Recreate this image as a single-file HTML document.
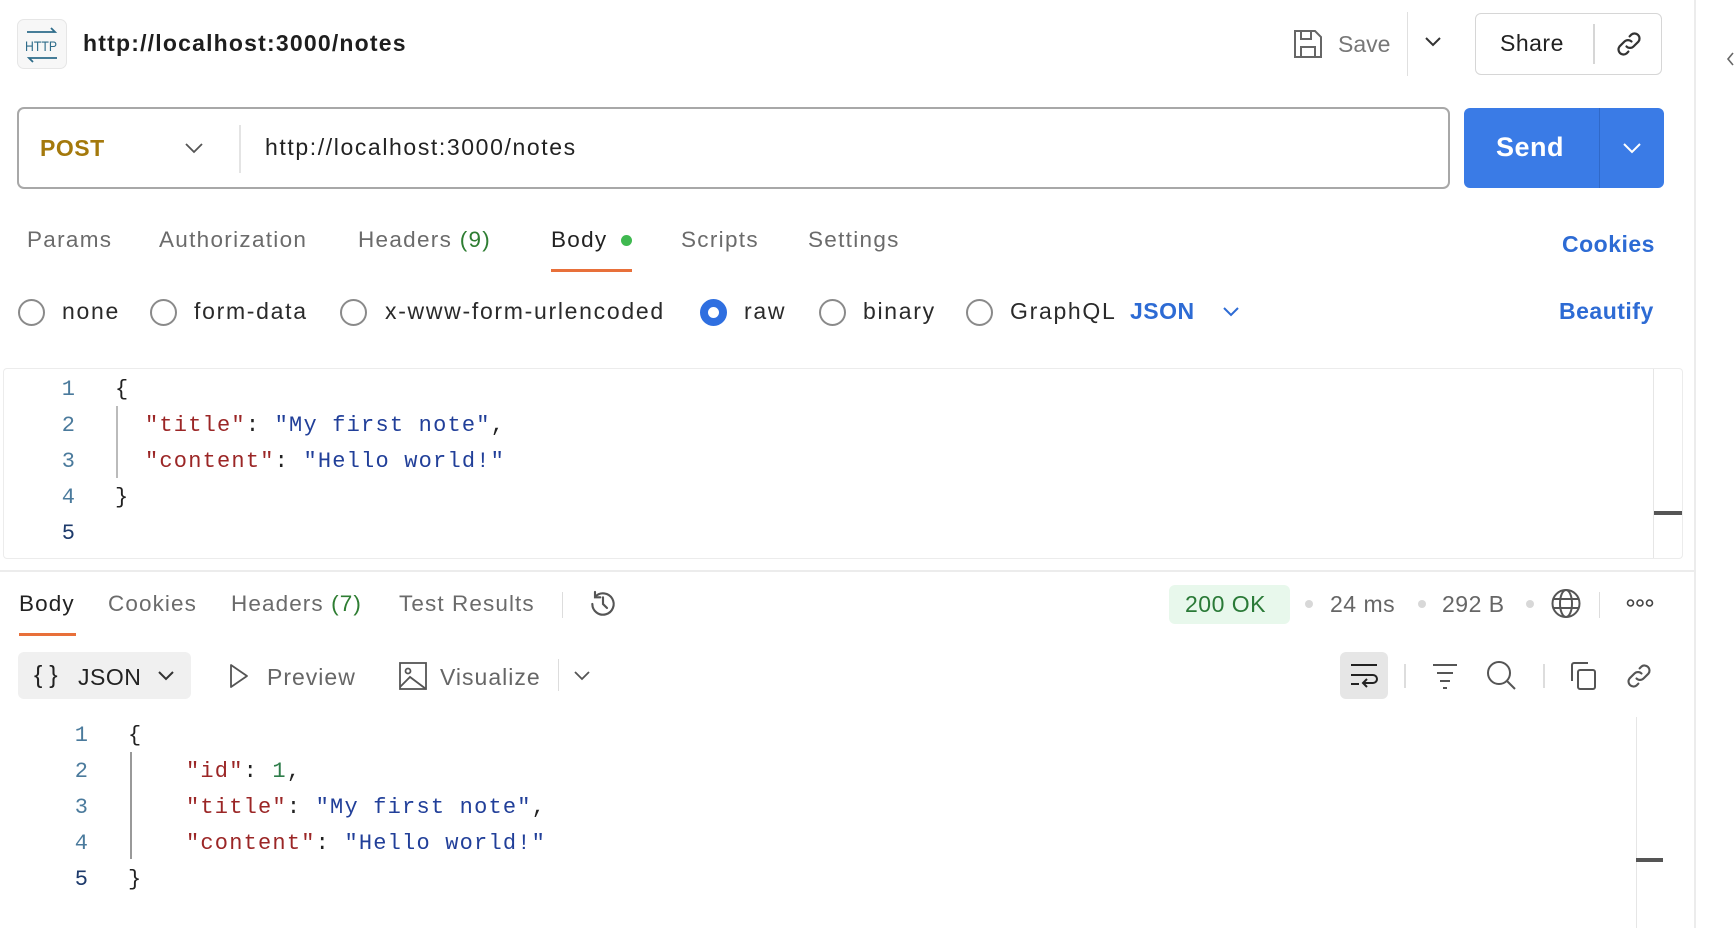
<!DOCTYPE html>
<html><head><meta charset="utf-8"><style>
*{margin:0;padding:0;box-sizing:border-box}
body{width:1734px;height:928px;background:#fff;position:relative;overflow:hidden;font-family:"Liberation Sans",sans-serif;color:#212121}
.a{position:absolute;white-space:nowrap}
.t{font-size:22.5px;color:#6b6b6b;top:227px;letter-spacing:1.3px}
.rt{font-size:22.5px;color:#6b6b6b;top:591px;letter-spacing:1.1px}
.radio{position:absolute;width:27px;height:27px;border:2px solid #8a8a8a;border-radius:50%;top:299px}
.rl{font-size:23px;color:#2a2a2a;top:298px;letter-spacing:1.7px}
.mono{font-family:"Liberation Mono",monospace;font-size:22px;letter-spacing:1.2px}
.ln{color:#4a7a9c;width:30px;text-align:center}
.k{color:#9b2626}.s{color:#213f99}.n{color:#2e7d4a}
svg{position:absolute}
</style></head><body>

<!-- header -->
<div class="a" style="left:17px;top:19px;width:50px;height:50px;border:1px solid #e6e6e6;border-radius:7px;background:#f7f7f7"></div>
<svg style="left:22px;top:26px" width="40" height="38" viewBox="0 0 40 38"><path d="M5 6H33l-4-4" stroke="#2e6c8a" stroke-width="1.8" fill="none"/><text x="3" y="25" font-family="Liberation Sans" font-size="14" fill="#2e6c8a" textLength="32" lengthAdjust="spacingAndGlyphs">HTTP</text><path d="M35 32H7l4 4" stroke="#2e6c8a" stroke-width="1.8" fill="none"/></svg>
<div class="a" style="left:83px;top:30px;font-size:23px;font-weight:bold;color:#1e1e1e;letter-spacing:1.2px">http://localhost:3000/notes</div>

<svg style="left:1293px;top:29px" width="30" height="30" viewBox="0 0 30 30" fill="none" stroke="#666" stroke-width="2"><path d="M2 2h20l6 6v20H2z"/><path d="M8 2v8h10V2"/><path d="M8 28V18h14v10"/></svg>
<div class="a" style="left:1338px;top:31px;font-size:23px;color:#777">Save</div>
<div class="a" style="left:1407px;top:12px;width:1px;height:64px;background:#e0e0e0"></div>
<svg style="left:1424px;top:36px" width="18" height="12" viewBox="0 0 18 12"><path d="M2 2l7 7 7-7" stroke="#333" stroke-width="2" fill="none"/></svg>
<div class="a" style="left:1475px;top:13px;width:187px;height:62px;border:1.5px solid #d6d6d6;border-radius:6px"></div>
<div class="a" style="left:1500px;top:30px;font-size:23px;color:#222;letter-spacing:0.5px">Share</div>
<div class="a" style="left:1593px;top:24px;width:1.5px;height:40px;background:#d6d6d6"></div>
<svg style="left:1614px;top:29px" width="30" height="30" viewBox="0 0 24 24" fill="none" stroke="#333" stroke-width="1.8" stroke-linecap="round"><path d="M10 14a4 4 0 0 0 5.6 0l4-4a4 4 0 0 0-5.6-5.6l-1.5 1.5"/><path d="M14 10a4 4 0 0 0-5.6 0l-4 4a4 4 0 0 0 5.6 5.6l1.5-1.5"/></svg>
<div class="a" style="left:1694px;top:0;width:2px;height:928px;background:#ececec"></div>
<svg style="left:1726px;top:52px" width="8" height="14" viewBox="0 0 8 14"><path d="M7 1L2 7l5 6" stroke="#666" stroke-width="1.6" fill="none"/></svg>

<!-- url bar -->
<div class="a" style="left:17px;top:107px;width:1433px;height:82px;border:2px solid #a8a8a8;border-radius:7px"></div>
<div class="a" style="left:40px;top:135px;font-size:23px;font-weight:bold;color:#a4790c;letter-spacing:0.5px">POST</div>
<svg style="left:184px;top:142px" width="20" height="12" viewBox="0 0 20 12"><path d="M2 2l8 8 8-8" stroke="#555" stroke-width="1.8" fill="none"/></svg>
<div class="a" style="left:239px;top:125px;width:2px;height:48px;background:#e4e4e4"></div>
<div class="a" style="left:265px;top:134px;font-size:23px;color:#222;letter-spacing:1.6px">http://localhost:3000/notes</div>
<div class="a" style="left:1464px;top:108px;width:200px;height:80px;background:#3a7be6;border-radius:6px"></div>
<div class="a" style="left:1599px;top:108px;width:1px;height:80px;background:#2f69c9"></div>
<div class="a" style="left:1496px;top:132px;font-size:27px;font-weight:bold;color:#fff;letter-spacing:0.5px">Send</div>
<svg style="left:1622px;top:142px" width="20" height="12" viewBox="0 0 20 12"><path d="M2 2l8 8 8-8" stroke="#fff" stroke-width="2" fill="none"/></svg>

<!-- tabs -->
<div class="a t" style="left:27px">Params</div>
<div class="a t" style="left:159px">Authorization</div>
<div class="a t" style="left:358px">Headers <span style="color:#2e7d32">(9)</span></div>
<div class="a t" style="left:551px;color:#222">Body</div>
<div class="a" style="left:621px;top:235px;width:11px;height:11px;border-radius:50%;background:#3fb950"></div>
<div class="a" style="left:551px;top:269px;width:81px;height:3px;background:#e8703a"></div>
<div class="a t" style="left:681px">Scripts</div>
<div class="a t" style="left:808px">Settings</div>
<div class="a" style="left:1562px;top:231px;font-size:23px;font-weight:bold;color:#2d6bd4;letter-spacing:0.5px">Cookies</div>

<!-- radios -->
<div class="radio" style="left:18px"></div><div class="a rl" style="left:62px">none</div>
<div class="radio" style="left:150px"></div><div class="a rl" style="left:194px">form-data</div>
<div class="radio" style="left:340px"></div><div class="a rl" style="left:385px">x-www-form-urlencoded</div>
<div class="radio" style="left:700px;border:8px solid #2f6fe0"></div><div class="a rl" style="left:744px">raw</div>
<div class="radio" style="left:819px"></div><div class="a rl" style="left:863px">binary</div>
<div class="radio" style="left:966px"></div><div class="a rl" style="left:1010px">GraphQL</div>
<div class="a" style="left:1130px;top:298px;font-size:23px;font-weight:bold;color:#2d6bd4;letter-spacing:0.5px">JSON</div>
<svg style="left:1222px;top:306px" width="18" height="12" viewBox="0 0 18 12"><path d="M2 2l7 7 7-7" stroke="#2d6bd4" stroke-width="2" fill="none"/></svg>
<div class="a" style="left:1559px;top:298px;font-size:23px;font-weight:bold;color:#2d6bd4;letter-spacing:0.5px">Beautify</div>

<!-- request editor -->
<div class="a" style="left:3px;top:368px;width:1680px;height:191px;border:1.5px solid #ececec;border-radius:4px"></div>
<div class="a" style="left:1653px;top:369px;width:1px;height:189px;background:#e6e6e6"></div>
<div class="a" style="left:1654px;top:511px;width:28px;height:4px;background:#555"></div>
<div class="a" style="left:116px;top:406px;width:1.5px;height:72px;background:#bbb"></div>
<div class="a mono" style="left:54px;top:372px;line-height:36px">
<div><span class="ln" style="display:inline-block">1</span><span style="margin-left:31px">{</span></div>
<div><span class="ln" style="display:inline-block">2</span><span style="margin-left:61px"><span class="k">"title"</span>: <span class="s">"My first note"</span>,</span></div>
<div><span class="ln" style="display:inline-block">3</span><span style="margin-left:61px"><span class="k">"content"</span>: <span class="s">"Hello world!"</span></span></div>
<div><span class="ln" style="display:inline-block">4</span><span style="margin-left:31px">}</span></div>
<div><span class="ln" style="display:inline-block;color:#1d3a6b">5</span></div>
</div>

<div class="a" style="left:0;top:570px;width:1695px;height:2px;background:#ececec"></div>

<!-- response tabs -->
<div class="a rt" style="left:19px;color:#222">Body</div>
<div class="a" style="left:19px;top:633px;width:57px;height:3px;background:#e8703a"></div>
<div class="a rt" style="left:108px">Cookies</div>
<div class="a rt" style="left:231px">Headers <span style="color:#2e7d32">(7)</span></div>
<div class="a rt" style="left:399px">Test Results</div>
<div class="a" style="left:562px;top:592px;width:1px;height:26px;background:#ddd"></div>
<svg style="left:586px;top:588px" width="34" height="32" viewBox="0 0 24 24" fill="none" stroke="#555" stroke-width="1.6" stroke-linecap="round"><path d="M4 12a8 8 0 1 0 2.3-5.6"/><path d="M6 3v4h4" /><path d="M12 7v5l3 3"/></svg>

<div class="a" style="left:1169px;top:585px;width:121px;height:39px;background:#e8f8ec;border-radius:6px"></div>
<div class="a" style="left:1185px;top:591px;font-size:23px;color:#2a7a37;letter-spacing:0.5px">200 OK</div>
<div class="a" style="left:1305px;top:600px;width:8px;height:8px;border-radius:50%;background:#d8d8d8"></div>
<div class="a" style="left:1330px;top:591px;font-size:23px;color:#666;letter-spacing:0.5px">24 ms</div>
<div class="a" style="left:1418px;top:600px;width:8px;height:8px;border-radius:50%;background:#d8d8d8"></div>
<div class="a" style="left:1442px;top:591px;font-size:23px;color:#666;letter-spacing:0.5px">292 B</div>
<div class="a" style="left:1526px;top:600px;width:8px;height:8px;border-radius:50%;background:#d8d8d8"></div>
<svg style="left:1550px;top:587px" width="32" height="33" viewBox="0 0 32 33" fill="none" stroke="#555" stroke-width="2"><circle cx="16" cy="16.5" r="13.5"/><ellipse cx="16" cy="16.5" rx="6" ry="13.5"/><path d="M3 12h26M3 21h26"/></svg>
<div class="a" style="left:1599px;top:592px;width:1px;height:26px;background:#ddd"></div>
<svg style="left:1626px;top:598px" width="28" height="10" viewBox="0 0 28 10" fill="none" stroke="#444" stroke-width="1.6"><circle cx="4.5" cy="5" r="3"/><circle cx="14" cy="5" r="3"/><circle cx="23.5" cy="5" r="3"/></svg>

<!-- toolbar -->
<div class="a" style="left:18px;top:652px;width:173px;height:47px;background:#f0f0f0;border-radius:6px"></div>
<div class="a" style="left:34px;top:661px;font-size:25px;color:#222">{ }</div>
<div class="a" style="left:78px;top:664px;font-size:23px;color:#222;letter-spacing:0.5px">JSON</div>
<svg style="left:157px;top:670px" width="18" height="12" viewBox="0 0 18 12"><path d="M2 2l7 7 7-7" stroke="#333" stroke-width="2" fill="none"/></svg>
<svg style="left:228px;top:662px" width="22" height="28" viewBox="0 0 22 28"><path d="M3 3l16 11L3 25z" stroke="#555" stroke-width="1.8" fill="none" stroke-linejoin="round"/></svg>
<div class="a" style="left:267px;top:664px;font-size:23px;color:#666;letter-spacing:1px">Preview</div>
<svg style="left:399px;top:662px" width="28" height="28" viewBox="0 0 28 28" fill="none" stroke="#555" stroke-width="1.8"><rect x="1" y="1" width="26" height="26"/><circle cx="9" cy="9" r="2.5"/><path d="M1 25l10-10 16 12"/></svg>
<div class="a" style="left:440px;top:664px;font-size:23px;color:#666;letter-spacing:1px">Visualize</div>
<div class="a" style="left:558px;top:659px;width:1px;height:32px;background:#ddd"></div>
<svg style="left:573px;top:670px" width="18" height="12" viewBox="0 0 18 12"><path d="M2 2l7 7 7-7" stroke="#555" stroke-width="1.8" fill="none"/></svg>

<div class="a" style="left:1340px;top:652px;width:48px;height:47px;background:#e6e6e6;border-radius:6px"></div>
<svg style="left:1348px;top:662px" width="32" height="30" viewBox="0 0 32 30" fill="none" stroke="#222" stroke-width="2"><path d="M3 3h26M3 13h22a4 4 0 0 1 0 8h-9M19 17l-4 4 4 4M3 22h8"/></svg>
<div class="a" style="left:1404px;top:664px;width:1.5px;height:24px;background:#ddd"></div>
<svg style="left:1430px;top:662px" width="30" height="28" viewBox="0 0 30 28" stroke="#555" stroke-width="2"><path d="M3 3h24M7 11h16M10 19h10M13 26h4"/></svg>
<svg style="left:1486px;top:660px" width="32" height="32" viewBox="0 0 32 32" fill="none" stroke="#555" stroke-width="2"><circle cx="13" cy="13" r="11"/><path d="M21 21l8 8"/></svg>
<div class="a" style="left:1543px;top:664px;width:1.5px;height:24px;background:#ddd"></div>
<svg style="left:1570px;top:661px" width="28" height="30" viewBox="0 0 28 30" fill="none" stroke="#555" stroke-width="2"><path d="M2 20V4a2 2 0 0 1 2-2h14"/><rect x="8" y="9" width="17" height="19" rx="2"/></svg>
<svg style="left:1624px;top:661px" width="30" height="30" viewBox="0 0 24 24" fill="none" stroke="#555" stroke-width="1.7" stroke-linecap="round"><path d="M10 14a4 4 0 0 0 5.6 0l4-4a4 4 0 0 0-5.6-5.6l-1.5 1.5"/><path d="M14 10a4 4 0 0 0-5.6 0l-4 4a4 4 0 0 0 5.6 5.6l1.5-1.5"/></svg>

<!-- response editor -->
<div class="a" style="left:1636px;top:717px;width:1px;height:211px;background:#e6e6e6"></div>
<div class="a" style="left:1636px;top:858px;width:27px;height:4px;background:#555"></div>
<div class="a" style="left:130px;top:752px;width:1.5px;height:107px;background:#999"></div>
<div class="a mono" style="left:67px;top:718px;line-height:36px">
<div><span class="ln" style="display:inline-block">1</span><span style="margin-left:31px">{</span></div>
<div><span class="ln" style="display:inline-block">2</span><span style="margin-left:89px"><span class="k">"id"</span>: <span class="n">1</span>,</span></div>
<div><span class="ln" style="display:inline-block">3</span><span style="margin-left:89px"><span class="k">"title"</span>: <span class="s">"My first note"</span>,</span></div>
<div><span class="ln" style="display:inline-block">4</span><span style="margin-left:89px"><span class="k">"content"</span>: <span class="s">"Hello world!"</span></span></div>
<div><span class="ln" style="display:inline-block;color:#1d3a6b">5</span><span style="margin-left:31px">}</span></div>
</div>
</body></html>
